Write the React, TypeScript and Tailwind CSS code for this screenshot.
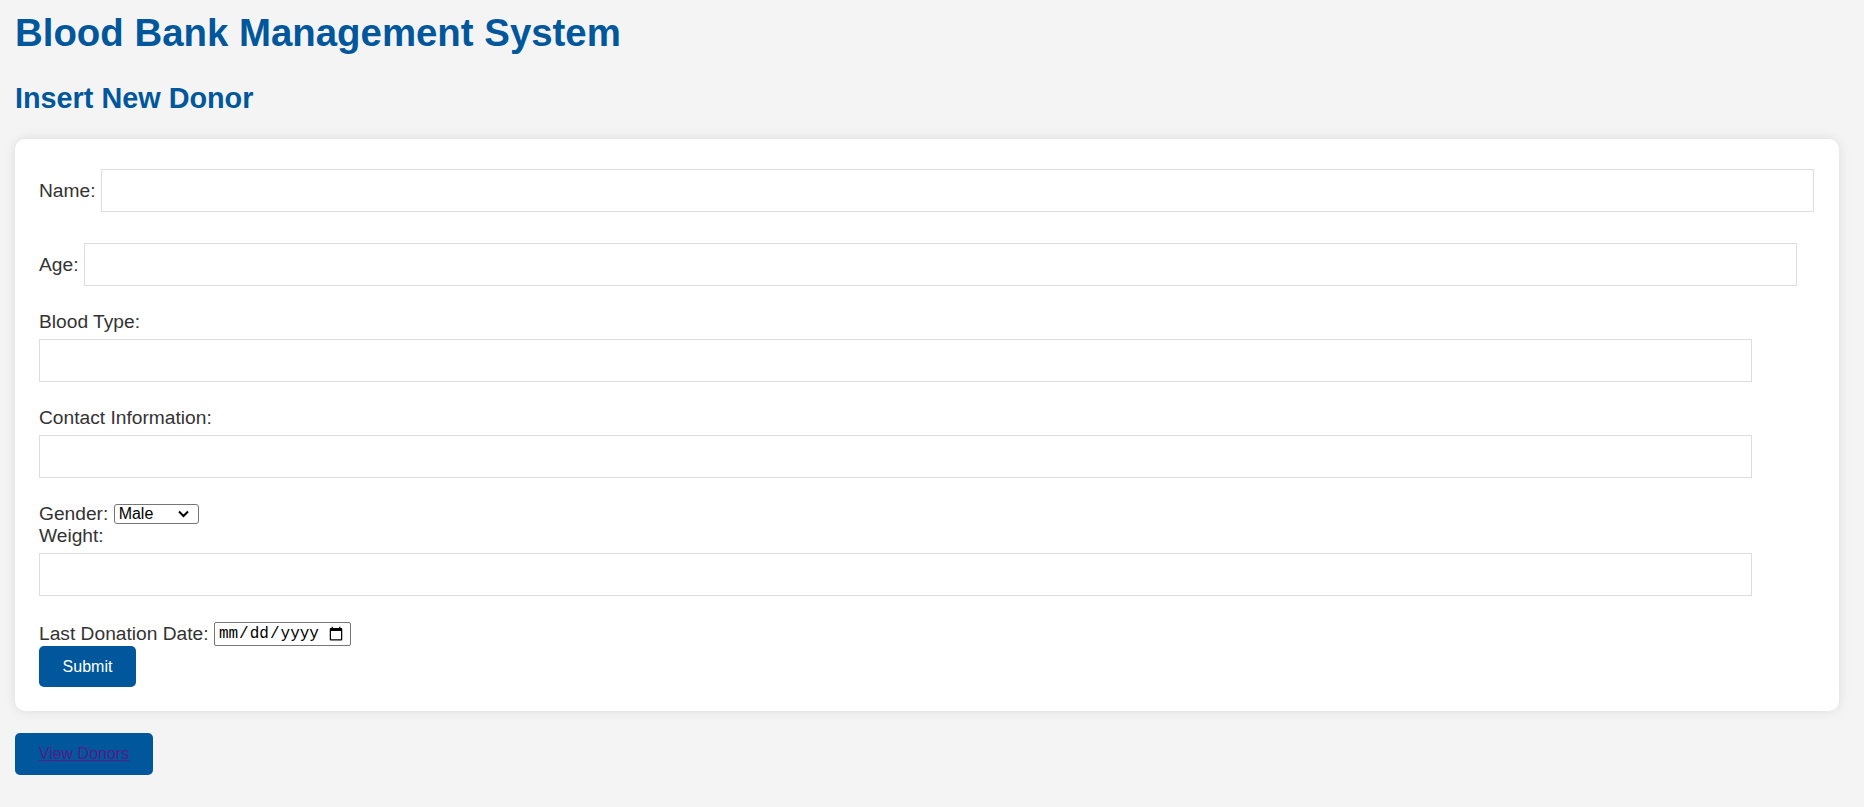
import { useState } from "react";

type Donor = {
  name: string;
  age: string;
  bloodType: string;
  contact: string;
  gender: string;
  weight: string;
  lastDonation: string;
};

const emptyDonor: Donor = {
  name: "",
  age: "",
  bloodType: "",
  contact: "",
  gender: "Male",
  weight: "",
  lastDonation: "",
};

const fieldClass =
  "block h-[43px] w-[1713px] shrink-0 border border-[#dddddd] bg-white px-[10px] text-[19.2px] text-[#333333] outline-none";

const InlineField = ({
  label,
  value,
  onChange,
  type = "text",
}: {
  label: string;
  value: string;
  onChange: (v: string) => void;
  type?: string;
}) => (
  <div className="flex items-center gap-[5.3px] pt-[6px] pb-[25px]">
    <label className="shrink-0 leading-[22px]">{label}</label>
    <input type={type} value={value} onChange={(e) => onChange(e.target.value)} className={fieldClass} />
  </div>
);

const StackedField = ({
  label,
  value,
  onChange,
  type = "text",
}: {
  label: string;
  value: string;
  onChange: (v: string) => void;
  type?: string;
}) => (
  <div className="flex flex-col gap-[6px] pb-[25px]">
    <label className="block leading-[22px]">{label}</label>
    <input type={type} value={value} onChange={(e) => onChange(e.target.value)} className={fieldClass} />
  </div>
);

export default function App() {
  const [donor, setDonor] = useState<Donor>(emptyDonor);

  const set = (key: keyof Donor) => (v: string) => setDonor({ ...donor, [key]: v });

  const handleSubmit = (e: React.FormEvent) => {
    e.preventDefault();
    setDonor(emptyDonor);
  };

  return (
    <div className="min-h-screen bg-[#f4f4f4] font-['Liberation_Sans',Arial,sans-serif] text-[19.2px] text-[#333333]">
      <div className="flex flex-col items-start pl-[15px] pt-[11px] pb-[30px]">
        <h1 className="text-[38.4px] font-bold leading-[44px] text-[#01579b]">Blood Bank Management System</h1>
        <h2 className="mt-[27px] text-[28.8px] font-bold leading-[33px] text-[#01579b]">Insert New Donor</h2>

        <form
          onSubmit={handleSubmit}
          className="mt-[24px] w-[1824px] rounded-[10px] bg-white p-[24px] shadow-[0_0_12px_rgba(0,0,0,0.1)]"
        >
          <InlineField label="Name:" value={donor.name} onChange={set("name")} />
          <InlineField label="Age:" type="number" value={donor.age} onChange={set("age")} />
          <StackedField label="Blood Type:" value={donor.bloodType} onChange={set("bloodType")} />
          <StackedField label="Contact Information:" value={donor.contact} onChange={set("contact")} />

          <div className="flex h-[22px] items-center gap-[5.3px]">
            <label className="leading-[22px]">Gender:</label>
            <div className="relative">
              <select
                value={donor.gender}
                onChange={(e) => set("gender")(e.target.value)}
                className="block h-[20px] w-[85px] appearance-none rounded-[3px] border border-[#767676] bg-white pl-[4px] text-[16px] leading-[18px] text-black outline-none"
              >
                <option>Male</option>
                <option>Female</option>
                <option>Other</option>
              </select>
              <svg
                className="pointer-events-none absolute right-[10px] top-[6px]"
                width="11"
                height="8"
                viewBox="0 0 11 8"
                fill="none"
              >
                <path d="M1 1.5 5.5 6 10 1.5" stroke="#000" strokeWidth="2" />
              </svg>
            </div>
          </div>

          <StackedField label="Weight:" type="number" value={donor.weight} onChange={set("weight")} />

          <div className="flex h-[25px] items-center gap-[5.3px]">
            <label className="leading-[22px]">Last Donation Date:</label>
            <input
              type="date"
              value={donor.lastDonation}
              onChange={(e) => set("lastDonation")(e.target.value)}
              className="block h-[24px] w-[137px] rounded-[2px] border border-[#767676] bg-white pl-[3px] pr-[4px] font-['Liberation_Mono',monospace] text-[16px] text-black outline-none"
            />
          </div>

          <button
            type="submit"
            className="block h-[41px] w-[97px] rounded-[5px] bg-[#01579b] text-[16px] leading-[18px] text-white"
          >
            Submit
          </button>
        </form>

        <div className="mt-[22px] flex h-[42px] w-[138px] items-center justify-center rounded-[5px] bg-[#01579b]">
          <a href="#" className="text-[16px] leading-[18px] text-[#551a8b] underline">
            View Donors
          </a>
        </div>
      </div>
    </div>
  );
}
